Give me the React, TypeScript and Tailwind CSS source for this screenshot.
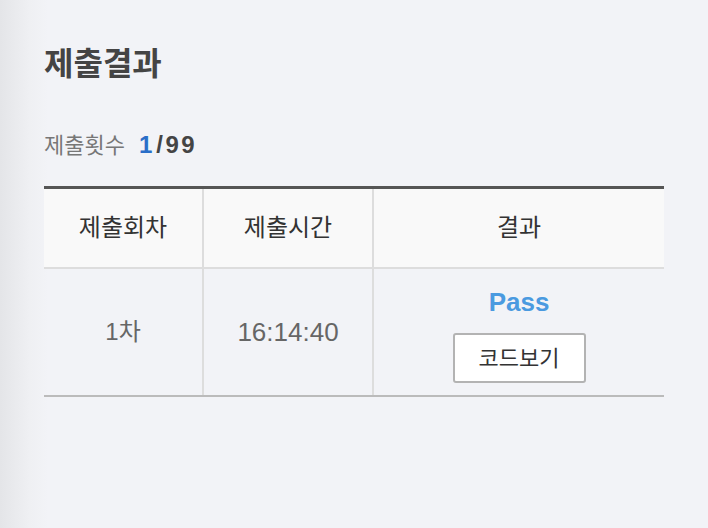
import React from 'react';

const font = "font-['Liberation_Sans','Noto_Sans_CJK_KR',sans-serif]";

const App: React.FC = () => {
  return (
    <div
      className={`${font} h-[528px] w-[708px] bg-[linear-gradient(to_right,#e4e5e8,#eff0f3_30px,#f2f3f7_48px)] pl-[44px] pt-[40px]`}
    >
      <h1 className="text-[32px] leading-[48px] font-bold text-[#444]">제출결과</h1>

      <div className="mt-[44px] flex items-center h-[26px]">
        <span className="text-[22px] text-[#777]">제출횟수</span>
        <span className="ml-[14px] text-[24px] font-bold text-[#2a6ec8]">1</span>
        <span className="ml-[4px] text-[24px] font-bold tracking-[2.5px] text-[#444]">/99</span>
      </div>

      <div className="mt-[28px] w-[620px] border-t-[3px] border-[#555]">
        <div className="grid grid-cols-[160px_170px_290px] bg-[#f9f9f9] border-b-2 border-[#ddd] h-[80px]">
          <div className="flex items-center justify-center border-r-2 border-[#ddd] text-[24px] text-[#333]">
            제출회차
          </div>
          <div className="flex items-center justify-center border-r-2 border-[#ddd] text-[24px] text-[#333]">
            제출시간
          </div>
          <div className="flex items-center justify-center text-[24px] text-[#333]">결과</div>
        </div>

        <div className="grid grid-cols-[160px_170px_290px] border-b-2 border-[#bbb] h-[128px]">
          <div className="flex items-center justify-center border-r-2 border-[#ddd] text-[24px] text-[#666]">
            1차
          </div>
          <div className="flex items-center justify-center border-r-2 border-[#ddd] text-[26px] text-[#666]">
            16:14:40
          </div>
          <div className="flex flex-col items-center pt-[19px]">
            <span className="text-[26px] leading-[28px] font-bold text-[#4a9ae0]">Pass</span>
            <button className="mt-[17px] h-[50px] w-[133px] rounded-[3px] border-2 border-[#b3b3b3] bg-white text-[22px] text-[#333]">
              코드보기
            </button>
          </div>
        </div>
      </div>
    </div>
  );
};

export default App;
